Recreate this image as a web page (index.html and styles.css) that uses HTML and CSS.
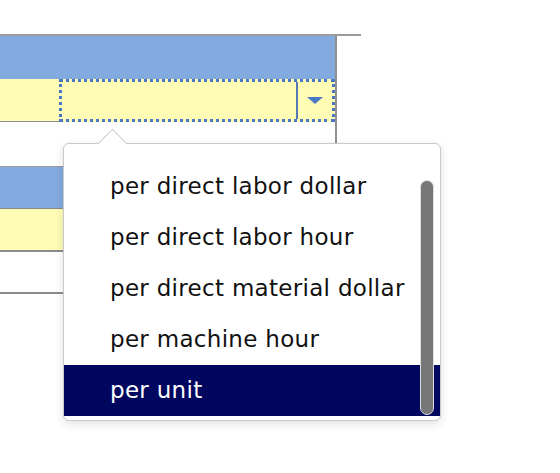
FILE: index.html
```html
<!DOCTYPE html>
<html lang="en">
<head>
  <meta charset="UTF-8" />
  <title>Overhead allocation</title>
  <link rel="stylesheet" href="styles.css">
</head>
<body>
  <div class="sheet">
    <div class="grid-top">
      <div class="column">
        <div class="head-row"></div>
        <div class="input-row">
          <div class="cell-left"></div>
          <div class="cell-select">
            <div class="select-value"></div>
            <div class="select-btn"><span class="caret"></span></div>
          </div>
        </div>
      </div>
    </div>

    <div class="grid-second">
      <div class="head-row small"></div>
      <div class="input-row small"></div>
    </div>
    <div class="rule-bottom"></div>

    <div class="popup">
      <div class="notch"></div>
      <ul class="options">
        <li>per direct labor dollar</li>
        <li>per direct labor hour</li>
        <li>per direct material dollar</li>
        <li>per machine hour</li>
        <li class="selected">per unit</li>
      </ul>
      <div class="scroll-thumb"></div>
    </div>
  </div>
</body>
</html>
```

FILE: styles.css
```css
body {
  margin: 0;
  background: #fff;
  font-family: "DejaVu Sans", Verdana, sans-serif;
}
.sheet {
  position: relative;
  width: 560px;
  height: 473px;
  overflow: hidden;
}
.grid-top {
  margin-top: 34px;
  width: 361px;
  border-top: 2px solid #9b9b9b;
}
.column {
  width: 335px;
  height: 130px;
  border-right: 2px solid #8f8f8f;
}
.head-row {
  height: 43px;
  background: #82aadf;
}
.input-row {
  display: flex;
  height: 43px;
  background: #fffcb6;
}
.cell-left {
  width: 59px;
  border-bottom: 1px solid #8a8a8a;
  box-sizing: border-box;
}
.cell-select {
  flex: 1;
  display: flex;
  border: 3px dotted #4a78c4;
}
.select-value {
  flex: 1;
  border-right: 2px solid #5577b4;
}
.select-btn {
  width: 34px;
  display: flex;
  align-items: center;
  justify-content: center;
}
.caret {
  width: 0;
  height: 0;
  border-left: 8px solid transparent;
  border-right: 8px solid transparent;
  border-top: 7px solid #4a78c4;
}
.grid-second {
  margin-top: 0;
  width: 100px;
  border-top: 1px solid #9b9b9b;
}
.head-row.small {
  height: 41px;
  border-bottom: 1px solid #8a8a8a;
}
.input-row.small {
  height: 41px;
  border-bottom: 2px solid #8a8a8a;
}
.rule-bottom {
  margin-top: 40px;
  width: 100px;
  border-top: 2px solid #8a8a8a;
}
.popup {
  position: absolute;
  left: 63px;
  top: 143px;
  width: 378px;
  height: 278px;
  box-sizing: border-box;
  background: #fff;
  border: 1px solid #c9c9c9;
  border-radius: 6px;
  box-shadow: 0 3px 10px rgba(0,0,0,0.12);
}
.notch {
  position: absolute;
  left: 38px;
  top: -11px;
  width: 20px;
  height: 20px;
  background: #fff;
  border-top: 1px solid #c9c9c9;
  border-left: 1px solid #c9c9c9;
  transform: rotate(45deg);
}
.options {
  position: relative;
  list-style: none;
  margin: 0;
  padding: 17px 0 0 0;
}
.options li {
  height: 51px;
  line-height: 51px;
  padding-left: 46px;
  font-size: 23px;
  letter-spacing: 0.3px;
  color: #111;
}
.options li.selected {
  background: #01065f;
  color: #fff;
}
.scroll-thumb {
  position: absolute;
  left: 356px;
  top: 36px;
  width: 12px;
  height: 233px;
  background: #777;
  border: 1px solid #ddd;
  border-radius: 7px;
}
```
